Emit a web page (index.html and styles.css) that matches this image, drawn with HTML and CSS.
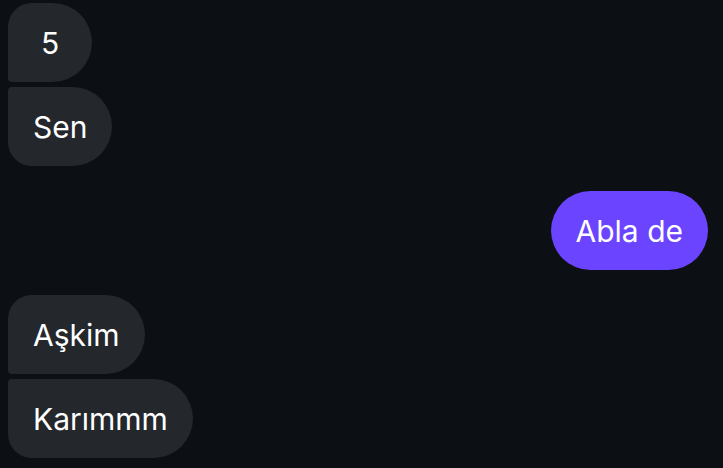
FILE: index.html
```html
<!DOCTYPE html>
<html>
<head>
<meta charset="utf-8">
<link rel="stylesheet" href="styles.css">
</head>
<body>
<div class="chat">
  <div class="group in">
    <div class="bubble first">5</div>
    <div class="bubble last">Sen</div>
  </div>
  <div class="group out">
    <div class="bubble single">Abla de</div>
  </div>
  <div class="group in">
    <div class="bubble first">Aşkim</div>
    <div class="bubble last">Karımmm</div>
  </div>
</div>
</body>
</html>
```
FILE: styles.css
```css
html, body {
  margin: 0;
  padding: 0;
  background: #0c0f14;
  height: 100%;
  overflow: hidden;
}
.chat {
  display: flex;
  flex-direction: column;
  gap: 25px;
  padding: 3px 15px 0 8px;
  font-family: "Inter", "Noto Sans", sans-serif;
}
.group {
  display: flex;
  flex-direction: column;
  gap: 5px;
}
.group.in { align-items: flex-start; }
.group.out { align-items: flex-end; }
.bubble {
  box-sizing: border-box;
  height: 79px;
  display: flex;
  align-items: center;
  padding: 0 25px;
  font-size: 30px;
  color: #ffffff;
  background: #24272c;
  border-radius: 40px;
  white-space: nowrap;
}
.bubble.first { border-radius: 24px 40px 40px 4px; min-width: 84px; justify-content: center; }
.bubble.last { border-radius: 4px 40px 40px 24px; }
.out .bubble { background: #6a44fe; }
```
